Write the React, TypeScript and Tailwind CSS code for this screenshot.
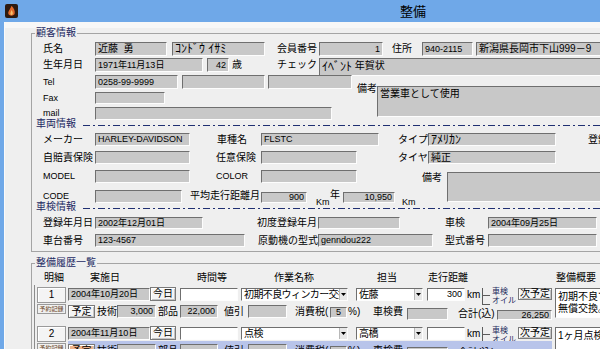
import type { ReactNode } from 'react'

const inset = 'border border-t-[#6f6f6f] border-l-[#6f6f6f] border-b-[#fdfdfd] border-r-[#fdfdfd]'

const sizes = { s: 'text-[9px]', m: 'text-[10px]', l: 'text-[12px]' }

type P = { className?: string; children?: ReactNode }

function Field({ className = '', children, right, white, sz = 'm' }: P & { right?: boolean; white?: boolean; sz?: 's' | 'm' | 'l' }) {
  return (
    <div
      className={`shrink-0 flex items-center overflow-hidden whitespace-nowrap px-[2px] leading-none ${sizes[sz]} ${inset} ${
        white ? 'bg-white' : 'bg-[#c8c8c8]'
      } ${right ? 'justify-end' : ''} ${className}`}
    >
      {children}
    </div>
  )
}

function Lbl({ className = '', children, sz = 'm' }: P & { sz?: 's' | 'm' }) {
  return (
    <div className={`shrink-0 self-stretch flex items-center whitespace-nowrap leading-none ${sizes[sz]} ${className}`}>
      {children}
    </div>
  )
}

function Btn({ className = '', children }: P) {
  return (
    <div
      className={`shrink-0 flex items-center justify-center whitespace-nowrap text-[10px] leading-none border border-[#7a7a7a] shadow-[inset_1px_1px_0_#fff,inset_-1px_-1px_0_#c4c4c4] ${className}`}
    >
      {children}
    </div>
  )
}

function Combo({ className = '', children }: P) {
  return (
    <div className={`shrink-0 flex items-stretch bg-white ${inset} ${className}`}>
      <span className="flex-1 min-w-0 flex items-center overflow-hidden whitespace-nowrap px-[2px] text-[10px] leading-none tracking-[-0.6px]">
        {children}
      </span>
      <span className="w-[8px] shrink-0 flex items-center justify-center bg-[#e8e8e8] border-l border-[#b8b8b8]">
        <svg width="5" height="3" viewBox="0 0 5 3">
          <path d="M0 0h5L2.5 3z" fill="#000" />
        </svg>
      </span>
    </div>
  )
}

function Section({ title }: { title: string }) {
  return (
    <div className="-ml-[7px] h-[10px] flex items-center">
      <span className="w-[47px] shrink-0 text-[10px] leading-none text-[#1c2a63]">{title}</span>
      <svg className="flex-1 min-w-0 h-[10px]">
        <line x1="0" y1="6.5" x2="700" y2="6.5" stroke="#1f2f72" strokeWidth="1" strokeDasharray="7 3 2 3" />
      </svg>
    </div>
  )
}

function AppIcon() {
  return (
    <svg className="ml-[5px] shrink-0" width="13" height="14" viewBox="0 0 13 14">
      <rect width="13" height="14" rx="2" fill="#2e1a10" />
      <path d="M6.5 1.8C9.2 4.8 10.2 7 9.7 9.6 9.2 12.3 3.8 12.3 3.3 9.6 2.9 7.4 5 5.8 6.5 1.8Z" fill="#e0692c" />
      <path d="M6.5 6C7.6 7.9 8.1 9 7.6 10.3 7.1 11.2 5.9 11.2 5.4 10.3 5.1 9.3 5.9 8 6.5 6Z" fill="#f6c26c" />
    </svg>
  )
}

type RowData = {
  no: number
  date: string
  work: string
  staff: string
  km: string
  memo: string
  selected?: boolean
  tech?: string
  parts?: string
  total?: string
  tax?: string
}

function MaintRow({ r }: { r: RowData }) {
  return (
    <div className="h-[39px] pt-[2px] flex items-start">
      {/* 明細 */}
      <div className="w-[29px] shrink-0 flex flex-col">
        <div className="h-[16px] flex items-center justify-center border border-[#9a9a9a] bg-[#f4f4f4] shadow-[inset_1px_1px_0_#fff] text-[10px] leading-none">
          {r.no}
        </div>
        <div className="mt-[1px] h-[10px] flex items-center justify-center border border-[#9a9a9a] bg-[#f0f0f0] text-[6px] leading-none text-[#6a4426]">
          予約記録
        </div>
      </div>

      <div className="ml-[2px] w-[484px] shrink-0 flex flex-col">
        {/* line 1 */}
        <div className="mt-[1px] h-[13px] flex items-start">
          <Field sz="s" className="w-[82px] h-[13px]">{r.date}</Field>
          <Btn className="-mt-[1px] w-[26px] h-[14px] bg-[#f4f4f4]">今日</Btn>
          <Field white className="ml-[4px] w-[58px] h-[13px]" />
          <Combo className="ml-[3px] w-[107px] h-[13px]">{r.work}</Combo>
          <Combo className="ml-[8px] w-[67px] h-[13px]">{r.staff}</Combo>
          <Field white right sz="s" className="ml-[4px] w-[38px] h-[13px]">{r.km}</Field>
          <Lbl className="ml-[2px] w-[14px]">km</Lbl>
          <div className="ml-[1px] h-[17px] shrink-0 flex items-stretch">
            <div className="w-[8px] flex flex-col border-l border-b border-[#5c5c5c]">
              <div className="h-1/2 border-b border-[#5c5c5c]" />
            </div>
            <div className="ml-[2px] w-[24px] flex flex-col justify-between text-[8px] leading-[8px] text-[#1c2a5c]">
              <span>車検</span>
              <span>オイル</span>
            </div>
          </div>
          <Btn className="ml-[2px] w-[34px] h-[12px] bg-[#f4f4f4]">次予定</Btn>
        </div>

        {/* line 2 */}
        <div className={`mt-[1px] pt-[3px] ${r.selected ? 'bg-[#b8c4ea]' : ''}`}>
          <div className="h-[13px] flex items-start">
            <Btn className={`w-[27px] h-[13px] ${r.selected ? 'bg-[#f0b48c]' : 'bg-[#f4f4f4]'}`}>予定</Btn>
            <Lbl className="ml-[2px] w-[20px]">技術</Lbl>
            <Field right sz="s" className="w-[39px] h-[13px]">{r.tech}</Field>
            <Lbl className="ml-[2px] w-[22px]">部品</Lbl>
            <Field right sz="s" className="w-[38px] h-[13px]">{r.parts}</Field>
            <Lbl className="ml-[6px] w-[24px]">値引</Lbl>
            <Field className="w-[39px] h-[13px]" />
            <Lbl className="ml-[8px] w-[35px]">消費税(</Lbl>
            <Field sz="s" className="mt-[2px] w-[17px] h-[11px] justify-center">{r.tax}</Field>
            <Lbl className="ml-[1px] w-[16px]">%)</Lbl>
            <Lbl className="ml-[9px] w-[34px]">車検費</Lbl>
            <Field className="mt-[3px] w-[41px] h-[12px]" />
            <Lbl className="ml-[10px] w-[39px] pt-[5px]">合計(込)</Lbl>
            <Field right sz="s" className="mt-[5px] w-[55px] h-[10px]">{r.total}</Field>
          </div>
        </div>
      </div>

      {/* 整備概要 */}
      <div
        className={`ml-[3px] mt-[1px] w-[60px] h-[30px] shrink-0 overflow-hidden bg-white px-[2px] pt-[2px] text-[10px] leading-[12px] ${inset}`}
      >
        {r.memo}
      </div>
    </div>
  )
}

const rows: RowData[] = [
  {
    no: 1,
    date: '2004年10月20日',
    work: '初期不良ウィンカー交換',
    staff: '佐藤',
    km: '300',
    memo: '初期不良で無償交換。',
    tech: '3,000',
    parts: '22,000',
    tax: '5',
    total: '26,250',
  },
  { no: 2, date: '2004年11月10日', work: '点検', staff: '高橋', km: '', memo: '1ヶ月点検', selected: true },
]

export default function App() {
  return (
    <div className="w-[600px] h-[349px] overflow-hidden flex flex-col bg-[#efefef] text-black font-['Liberation_Sans','Noto_Sans_CJK_JP',sans-serif]">
      {/* Title bar */}
      <div className="h-[22px] shrink-0 flex items-center bg-[#6fa8e8]">
        <AppIcon />
        <span className="ml-[382px] text-[13px] leading-none">整備</span>
      </div>

      <div className="flex-1 min-h-0 flex">
        <div className="w-[4px] shrink-0 bg-[#6fa8e8]" />
        <div className="w-px shrink-0 bg-[#fafafa]" />
        <div className="flex-1 min-w-0 flex flex-col">
          <div className="h-[6px] shrink-0 bg-[#f7f7f7]" />

          {/* 顧客情報 */}
          <fieldset className="ml-[26px] w-[620px] shrink-0 border border-[#a4a4a4] pb-[4px]">
            <legend className="ml-[3px] px-[1px] text-[10px] leading-[10px] text-[#1c2a63]">顧客情報</legend>
            <div className="pl-[11px] flex flex-col">
              <div className="mt-[4px] h-[14px] flex items-start">
                <Lbl className="w-[52px]">氏名</Lbl>
                <Field className="w-[72px] h-[14px]">近藤&nbsp; 勇</Field>
                <Field sz="l" className="ml-[5px] w-[93px] h-[14px]">ｺﾝﾄﾞｳ ｲｻﾐ</Field>
                <Lbl className="ml-[12px] w-[42px]">会員番号</Lbl>
                <Field right sz="s" className="w-[64px] h-[14px]">1</Field>
                <Lbl className="ml-[9px] w-[30px]">住所</Lbl>
                <Field sz="s" className="w-[51px] h-[14px]">940-2115</Field>
                <Field className="ml-[3px] w-[140px] h-[14px]">新潟県長岡市下山999－9</Field>
              </div>

              <div className="mt-[2px] h-[14px] flex items-start">
                <Lbl className="w-[52px]">生年月日</Lbl>
                <Field sz="s" className="w-[108px] h-[14px]">1971年11月13日</Field>
                <Field right sz="s" className="ml-[4px] w-[22px] h-[14px]">42</Field>
                <Lbl className="ml-[3px] w-[10px]">歳</Lbl>
                <Lbl className="ml-[35px] w-[42px]">チェック</Lbl>
                <Field className="w-[300px] h-[18px] items-start pt-[2px]">
                  <span className="text-[12px]">ｲﾍﾞﾝﾄ</span>&nbsp;年賀状
                </Field>
              </div>

              <div className="mt-[3px] h-[14px] flex items-start">
                <Lbl sz="s" className="w-[52px]">Tel</Lbl>
                <Field sz="s" className="w-[83px] h-[14px]">0258-99-9999</Field>
                <Field className="ml-[4px] w-[83px] h-[14px]" />
                <Field className="ml-[3px] w-[84px] h-[14px]" />
                <div className="ml-[5px] mt-[9px] w-[20px] shrink-0 text-[10px] leading-none">備考</div>
                <Field className="mt-[11px] w-[230px] h-[31px] items-start pt-[2px]">営業車として使用</Field>
              </div>

              <div className="mt-[3px] h-[12px] flex items-start">
                <Lbl sz="s" className="w-[52px]">Fax</Lbl>
                <Field className="w-[70px] h-[12px]" />
              </div>

              <div className="mt-[3px] h-[12px] flex items-start">
                <Lbl sz="s" className="w-[52px]">mail</Lbl>
                <Field className="w-[237px] h-[13px]" />
              </div>

              <Section title="車両情報" />

              <div className="mt-[4px] h-[13px] flex items-start">
                <Lbl className="w-[52px]">メーカー</Lbl>
                <Field sz="s" className="w-[95px] h-[13px]">HARLEY-DAVIDSON</Field>
                <Lbl className="ml-[27px] w-[44px]">車種名</Lbl>
                <Field sz="s" className="w-[118px] h-[13px]">FLSTC</Field>
                <Lbl className="ml-[19px] w-[30px]">タイプ</Lbl>
                <Field sz="l" className="w-[128px] h-[13px]">ｱﾒﾘｶﾝ</Field>
                <Lbl className="ml-[32px]">登録</Lbl>
              </div>

              <div className="mt-[5px] h-[13px] flex items-start">
                <Lbl className="w-[52px]">自賠責保険</Lbl>
                <Field className="w-[95px] h-[13px]" />
                <Lbl className="ml-[26px] w-[45px]">任意保険</Lbl>
                <Field className="w-[96px] h-[13px]" />
                <Lbl className="ml-[41px] w-[30px]">タイヤ</Lbl>
                <Field className="w-[128px] h-[13px]">純正</Field>
              </div>

              <div className="mt-[6px] h-[13px] flex items-start">
                <Lbl sz="s" className="w-[52px]">MODEL</Lbl>
                <Field className="w-[95px] h-[13px]" />
                <Lbl sz="s" className="ml-[26px] w-[45px]">COLOR</Lbl>
                <Field className="w-[96px] h-[13px]" />
                <Lbl className="ml-[65px] w-[25px] pt-[2px]">備考</Lbl>
                <Field className="mt-[2px] w-[160px] h-[30px]" />
              </div>

              <div className="mt-[7px] h-[12px] flex items-start">
                <Lbl sz="s" className="w-[52px]">CODE</Lbl>
                <Field className="w-[87px] h-[13px]" />
                <Lbl className="ml-[8px] w-[71px]">平均走行距離月</Lbl>
                <Field right sz="s" className="mt-[2px] w-[46px] h-[11px]">900</Field>
                <div className="ml-[9px] mt-[8px] w-[14px] shrink-0 text-[9px] leading-none">Km</div>
                <div className="w-[10px] shrink-0 text-[10px] leading-none">年</div>
                <Field right sz="s" className="ml-[3px] mt-[2px] w-[52px] h-[11px]">10,950</Field>
                <div className="ml-[7px] mt-[8px] shrink-0 text-[9px] leading-none">Km</div>
              </div>

              <Section title="車検情報" />

              <div className="mt-[5px] h-[12px] flex items-start">
                <Lbl className="w-[52px]">登録年月日</Lbl>
                <Field sz="s" className="w-[108px] h-[12px]">2002年12月01日</Field>
                <Lbl className="ml-[54px] w-[61px]">初度登録年月</Lbl>
                <Field className="w-[82px] h-[12px]" />
                <Lbl className="ml-[45px] w-[43px]">車検</Lbl>
                <Field sz="s" className="w-[109px] h-[12px]">2004年09月25日</Field>
              </div>

              <div className="mt-[5px] h-[13px] flex items-start">
                <Lbl className="w-[52px]">車台番号</Lbl>
                <Field sz="s" className="w-[150px] h-[13px]">123-4567</Field>
                <Lbl className="ml-[13px] w-[60px]">原動機の型式</Lbl>
                <Field sz="s" className="w-[115px] h-[13px]">genndou222</Field>
                <Lbl className="ml-[12px] w-[43px]">型式番号</Lbl>
                <Field className="w-[109px] h-[13px]" />
              </div>
            </div>
          </fieldset>

          {/* 整備履歴一覧 */}
          <fieldset className="mt-[6px] ml-[26px] w-[620px] shrink-0 border border-[#a4a4a4]">
            <legend className="ml-[3px] px-[1px] text-[10px] leading-[10px] text-[#1c2a63]">整備履歴一覧</legend>
            <div className="mt-[5px] pl-[12px] h-[10px] flex items-center text-[10px] leading-none whitespace-nowrap">
              <span className="w-[20px] shrink-0">明細</span>
              <span className="ml-[26px] w-[30px] shrink-0">実施日</span>
              <span className="ml-[77px] w-[30px] shrink-0">時間等</span>
              <span className="ml-[47px] w-[40px] shrink-0">作業名称</span>
              <span className="ml-[63px] w-[20px] shrink-0">担当</span>
              <span className="ml-[31px] w-[40px] shrink-0">走行距離</span>
              <span className="ml-[88px] w-[40px] shrink-0">整備概要</span>
            </div>
            <div className="mt-[2px] ml-[2px] pl-[2px] border-l border-[#8c8c8c] flex flex-col">
              {rows.map((r) => (
                <MaintRow key={r.no} r={r} />
              ))}
            </div>
          </fieldset>
        </div>
      </div>
    </div>
  )
}
